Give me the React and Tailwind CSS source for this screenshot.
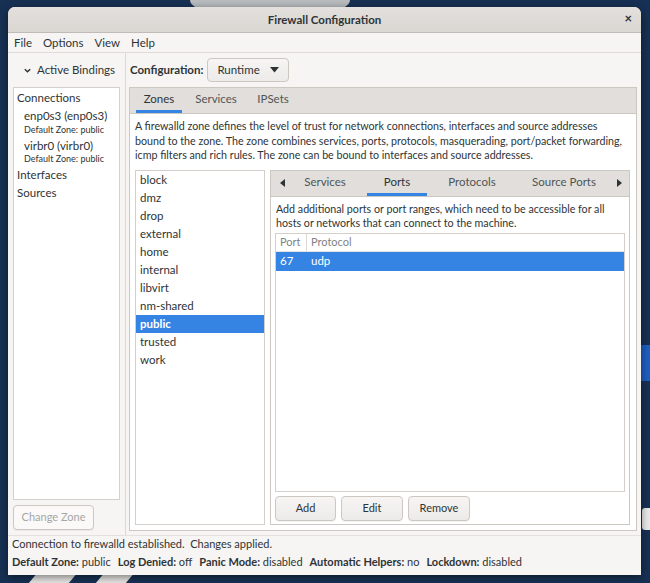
import React from 'react';

const font = { fontFamily: 'Lato, "Noto Sans", sans-serif' };

const Chevron = () => (
  <svg width="9" height="9" viewBox="0 0 10 10" className="text-[#2e3436]">
    <path d="M2 3.5 L5 6.5 L8 3.5" fill="none" stroke="currentColor" strokeWidth="1.6" />
  </svg>
);

const Button = ({ children, disabled, className = '' }) => (
  <button
    className={`h-[25px] rounded-[4px] border border-[#cdc7c2] bg-gradient-to-b from-[#f6f5f4] to-[#edebe9] text-[11px] shadow-[0_1px_0_rgba(0,0,0,0.05)] ${disabled ? 'text-[#a4a6a6] bg-none bg-[#faf9f8]' : 'text-[#2e3436]'} ${className}`}
  >
    {children}
  </button>
);

const zones = ['block', 'dmz', 'drop', 'external', 'home', 'internal', 'libvirt', 'nm-shared', 'public', 'trusted', 'work'];

export default function App() {
  return (
    <div className="relative w-[650px] h-[583px] overflow-hidden bg-[#173154]" style={font}>
      {/* wallpaper bits */}
      <div className="absolute left-[190px] top-[-20px] w-[160px] h-[40px] rounded-[50%] bg-[#b9bdbf]" />
      <div className="absolute left-[28px] top-[574px] w-[40px] h-[20px] bg-[#e7e6e3] -skew-x-[40deg]" />
      <div className="absolute left-[95px] top-[574px] w-[30px] h-[20px] bg-[#e7e6e3] -skew-x-[40deg]" />
      <div className="absolute left-[640px] top-[345px] w-[14px] h-[36px] bg-[#1d5fc0]" />
      <div className="absolute left-[642px] top-[508px] w-[8px] h-[22px] bg-[#e9e9ea] rounded-l-[3px]" />

      {/* window */}
      <div className="absolute left-[8px] top-[7px] w-[633px] h-[568px] flex flex-col bg-[#f6f5f4] rounded-t-[7px] shadow-[0_2px_8px_rgba(0,0,0,0.5)] text-[#2e3436] text-[11px]">
        {/* title bar */}
        <div className="relative h-[26px] flex items-center justify-center bg-gradient-to-b from-[#e3e0dd] to-[#dad6d2] border-b border-[#c0bbb6] rounded-t-[7px]">
          <span className="font-bold text-[11.5px]">Firewall Configuration</span>
          <span className="absolute right-[9px] top-[5px] text-[13px] font-bold leading-none">×</span>
        </div>

        {/* menu bar */}
        <div className="h-[20px] flex items-center gap-[11px] px-[6px] border-b border-[#dedbd8] text-[11.5px]">
          <span>File</span>
          <span>Options</span>
          <span>View</span>
          <span>Help</span>
        </div>

        {/* body */}
        <div className="flex flex-1 min-h-0">
          {/* left pane */}
          <div className="w-[118px] flex flex-col border-r border-[#dcd8d4] px-[5px] pb-[5px]">
            <div className="h-[34px] flex items-center gap-[5px] pl-[10px]">
              <Chevron />
              <span className="text-[11.5px]">Active Bindings</span>
            </div>
            <div className="flex-1 bg-white border border-[#d4cfca] pt-[1px] leading-none">
              <div className="h-[18px] flex items-center px-[3px] text-[11.5px]">Connections</div>
              <div className="pl-[10px] pt-[3px]">
                <div className="text-[11.5px]">enp0s3 (enp0s3)</div>
                <div className="text-[9px] mt-[3px]">Default Zone: public</div>
              </div>
              <div className="pl-[10px] pt-[6px]">
                <div className="text-[11.5px]">virbr0 (virbr0)</div>
                <div className="text-[9px] mt-[3px]">Default Zone: public</div>
              </div>
              <div className="h-[18px] flex items-center px-[3px] mt-[3px] text-[11.5px]">Interfaces</div>
              <div className="h-[18px] flex items-center px-[3px] text-[11.5px]">Sources</div>
            </div>
            <div className="pt-[5px]">
              <Button disabled className="w-[81px]">Change Zone</Button>
            </div>
          </div>

          {/* right pane */}
          <div className="flex-1 flex flex-col px-[3px] pb-[4px]">
            <div className="h-[34px] flex items-center gap-[4px] pl-[1px]">
              <span className="font-bold text-[11.5px]">Configuration:</span>
              <div className="w-[82px] h-[24px] flex items-center justify-between px-[9px] rounded-[4px] border border-[#cdc7c2] bg-gradient-to-b from-[#f6f5f4] to-[#edebe9]">
                <span className="text-[11.5px]">Runtime</span>
                <svg width="9" height="6" viewBox="0 0 9 6"><path d="M0 0 H9 L4.5 5.5 Z" fill="#2e3436" /></svg>
              </div>
            </div>

            {/* outer notebook */}
            <div className="flex-1 flex flex-col border border-[#cdc7c2] bg-white mr-[1px]">
              <div className="h-[26px] flex items-end gap-[6px] pl-[6px] bg-[#e1dedb] border-b border-[#cdc7c2]">
                <div className="h-full w-[46px] flex items-center justify-center border-b-[3px] border-[#3584e4] text-[11.5px]">Zones</div>
                <div className="h-full w-[56px] flex items-center justify-center border-b-[3px] border-transparent text-[11.5px] text-[#505556]">Services</div>
                <div className="h-full w-[46px] flex items-center justify-center border-b-[3px] border-transparent text-[11.5px] text-[#505556]">IPSets</div>
              </div>
              <div className="flex-1 flex flex-col px-[5px] pt-[5px] pb-[5px]">
                <p className="text-[10.7px] leading-[14.5px] pr-[6px]">
                  A firewalld zone defines the level of trust for network connections, interfaces and source addresses bound to the zone. The zone combines services, ports, protocols, masquerading, port/packet forwarding, icmp filters and rich rules. The zone can be bound to interfaces and source addresses.
                </p>
                <div className="flex-1 flex gap-[5px] mt-[7px]">
                  {/* zone list */}
                  <div className="w-[130px] bg-white border border-[#d4cfca]">
                    {zones.map((z) => (
                      <div
                        key={z}
                        className={`h-[18px] flex items-center px-[4px] text-[11.5px] ${z === 'public' ? 'bg-[#3584e4] text-white font-bold' : ''}`}
                      >
                        {z}
                      </div>
                    ))}
                  </div>

                  {/* inner notebook */}
                  <div className="flex-1 flex flex-col border border-[#cdc7c2] mr-[1px]">
                    <div className="h-[26px] flex items-end bg-[#e1dedb] border-b border-[#cdc7c2] text-[11.5px] text-[#505556]">
                      <div className="h-full w-[22px] flex items-center justify-center">
                        <svg width="5" height="8" viewBox="0 0 5 8"><path d="M5 0 V8 L0 4 Z" fill="#2e3436" /></svg>
                      </div>
                      <div className="h-full w-[64px] flex items-center justify-center border-b-[3px] border-transparent">Services</div>
                      <div className="h-full w-[60px] ml-[10px] flex items-center justify-center border-b-[3px] border-[#3584e4] text-[#2e3436]">Ports</div>
                      <div className="h-full w-[68px] ml-[11px] flex items-center justify-center border-b-[3px] border-transparent">Protocols</div>
                      <div className="h-full w-[80px] ml-[18px] flex items-center justify-center border-b-[3px] border-transparent">Source Ports</div>
                      <div className="h-full flex-1 flex items-center justify-end pr-[7px]">
                        <svg width="5" height="8" viewBox="0 0 5 8"><path d="M0 0 V8 L5 4 Z" fill="#2e3436" /></svg>
                      </div>
                    </div>
                    <div className="flex-1 flex flex-col px-[4px] pt-[5px] pb-[3px]">
                      <p className="text-[10.7px] leading-[14px] pl-[1px]">
                        Add additional ports or port ranges, which need to be accessible for all hosts or networks that can connect to the machine.
                      </p>
                      <div className="flex-1 mt-[3px] bg-white border border-[#d4cfca]">
                        <div className="h-[18px] flex items-center text-[11px] text-[#7f8384] border-b border-[#e6e3e0]">
                          <div className="w-[31px] h-full flex items-center pl-[4px] border-r border-[#dcd8d4]">Port</div>
                          <div className="pl-[4px]">Protocol</div>
                        </div>
                        <div className="h-[19px] flex items-center bg-[#3584e4] text-white text-[11.5px]">
                          <div className="w-[31px] pl-[4px]">67</div>
                          <div className="pl-[4px]">udp</div>
                        </div>
                      </div>
                      <div className="flex gap-[5px] pt-[4px]">
                        <Button className="w-[61px]">Add</Button>
                        <Button className="w-[62px]">Edit</Button>
                        <Button className="w-[62px]">Remove</Button>
                      </div>
                    </div>
                  </div>
                </div>
              </div>
            </div>
          </div>
        </div>

        {/* status */}
        <div className="h-[40px] flex flex-col justify-center gap-[4px] px-[4px] pb-[5px] border-t border-[#e3e0dd] text-[11px] leading-[14px]">
          <div>Connection to firewalld established.&nbsp; Changes applied.</div>
          <div className="flex gap-[7px]">
            <span><b>Default Zone:</b> public</span>
            <span><b>Log Denied:</b> off</span>
            <span><b>Panic Mode:</b> disabled</span>
            <span><b>Automatic Helpers:</b> no</span>
            <span><b>Lockdown:</b> disabled</span>
          </div>
        </div>
      </div>
    </div>
  );
}
